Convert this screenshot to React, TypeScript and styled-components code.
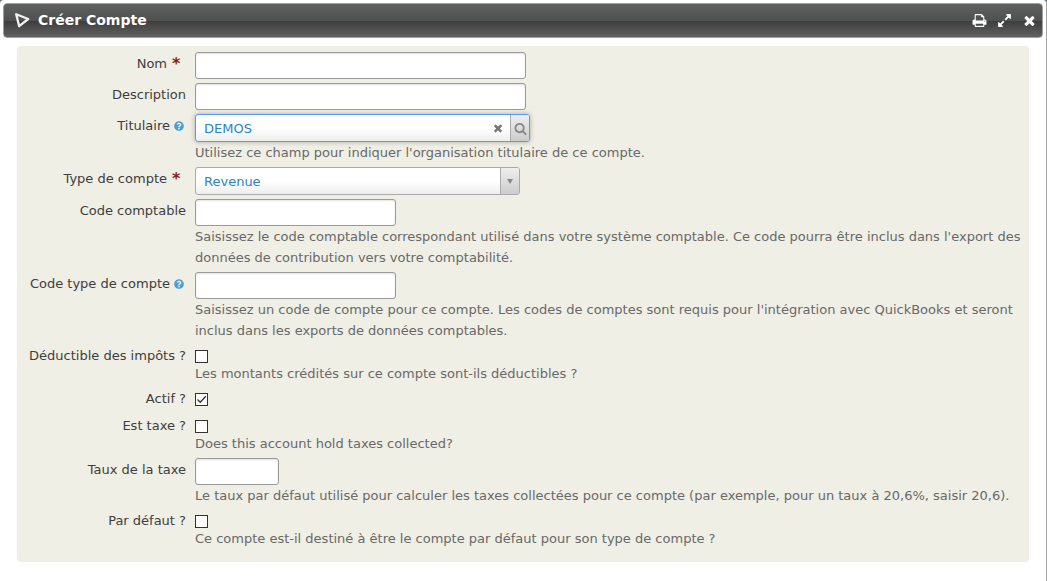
import React from 'react';
import styled, { createGlobalStyle, css } from 'styled-components';
import { FaQuestionCircle } from 'react-icons/fa';

const GlobalStyle = createGlobalStyle`
  *, *::before, *::after { box-sizing: border-box; }
  body {
    margin: 0;
    background: #6d7580;
    color: #3e3e3e;
    font: 13px/21px Verdana, "DejaVu Sans", sans-serif;
  }
`;

const Dialog = styled.main`
  min-height: 100vh;
  padding: 3px 3px 19px;
  background: #fff;
  border-right: 1px solid #a3a3a3;
  border-radius: 4px 4px 0 0;
`;

const TitleBar = styled.header`
  display: flex;
  align-items: center;
  height: 35px;
  padding: 0 5px 0 10px;
  border: 1px solid #a0a0a0;
  border-radius: 4px;
  background: linear-gradient(#5f6160 0%, #4f5050 50%, #3d3d3d 51%, #616161 100%);
  color: #fff;
`;

const Title = styled.h1`
  flex: 1;
  margin: 0 0 0 7px;
  font-size: 14px;
  line-height: 21px;
  font-weight: bold;
`;

const Actions = styled.div`
  display: flex;
  gap: 9px;
`;

const IconButton = styled.button`
  display: flex;
  align-items: center;
  justify-content: center;
  width: 16px;
  height: 16px;
  padding: 0;
  border: 0;
  background: none;
  color: inherit;
  cursor: pointer;
`;

const Panel = styled.form`
  margin: 8px 14px 0;
  padding: 4px 4px 11px 10px;
  border-radius: 4px;
  background: #efefe5;
`;

const Row = styled.div`
  display: grid;
  grid-template-columns: 159px minmax(0, 1fr);
  column-gap: 9px;
  padding: 2px 0;
`;

const LabelCell = styled.div<{ $raised?: boolean }>`
  display: flex;
  align-items: flex-start;
  justify-content: flex-end;
  padding-top: ${p => (p.$raised ? 0 : 1)}px;
  white-space: nowrap;
`;

const Required = styled.span`
  width: 14px;
  margin-left: 5px;
  color: #8a1f11;
  font-size: 16px;
  font-weight: bold;
`;

const HelpLink = styled.a`
  display: flex;
  align-items: center;
  width: 10px;
  height: 22px;
  margin: 0 2px 0 4px;
  color: #4d9fcf;
`;

const Help = styled.p`
  margin: 0;
  color: #696969;
`;

const fieldFrame = css`
  border: 1px solid #999;
  border-radius: 3px;
`;

const TextInput = styled.input<{ $width: number }>`
  ${fieldFrame}
  display: block;
  width: ${p => p.$width}px;
  max-width: 100%;
  height: 27px;
  padding: 0 8px;
  background: #fff;
  box-shadow: inset 0 1px 2px rgba(0, 0, 0, 0.12);
  font: inherit;
`;

const Combo = styled.div<{ $width: number; $active?: boolean }>`
  ${fieldFrame}
  display: flex;
  width: ${p => p.$width}px;
  max-width: 100%;
  height: 28px;
  overflow: hidden;
  background: linear-gradient(#fff 50%, #eee 100%);
  border-color: ${p => (p.$active ? '#5897fb' : '#aaa')};
  box-shadow: ${p => (p.$active ? '0 0 5px rgba(0, 0, 0, 0.3)' : 'none')};
`;

const comboText = css`
  flex: 1;
  min-width: 0;
  padding: 0 8px;
  border: 0;
  outline: 0;
  appearance: none;
  background: transparent;
  color: #2786c2;
  font: inherit;
`;

const ComboInput = styled.input`${comboText}`;
const ComboSelect = styled.select`${comboText}`;

const ClearButton = styled(IconButton)`
  height: 26px;
  margin-right: 4px;
  color: #777;
`;

const ComboEnd = styled.button`
  display: flex;
  align-items: center;
  justify-content: center;
  width: 19px;
  padding: 0;
  border: 0;
  border-left: 1px solid #aaa;
  background: linear-gradient(#eee 0%, #ccc 100%);
  color: #888;
`;

const SelectEnd = styled(ComboEnd).attrs({ as: 'span' })`
  pointer-events: none;
`;

const Checkbox = styled.input.attrs({ type: 'checkbox' })`
  display: block;
  appearance: none;
  width: 13px;
  height: 13px;
  margin: 5px 0 0;
  border: 1px solid #333;
  background: #fff;
  &:checked {
    background: #fff url("data:image/svg+xml,%3Csvg xmlns='http://www.w3.org/2000/svg' viewBox='0 0 11 11'%3E%3Cpath d='M1.5 5.5l2.7 2.7 5.6-6' fill='none' stroke='%23333' stroke-width='1.3'/%3E%3C/svg%3E");
  }
`;

const CheckOnly = styled.div`
  display: flow-root;
  height: 23px;
`;

const glyphs = {
  print:
    'M448 1536h896v-256h-896v256zm0-640h896v-384h-160q-40 0-68-28t-28-68v-160h-640v640zm1152 64q0-26-19-45t-45-19-45 19-19 45 19 45 45 19 45-19 19-45zm128 0v416q0 13-9.5 22.5t-22.5 9.5h-224v160q0 40-28 68t-68 28h-960q-40 0-68-28t-28-68v-160h-224q-13 0-22.5-9.5t-9.5-22.5v-416q0-79 56.5-135.5t135.5-56.5h64v-544q0-40 28-68t68-28h672q40 0 88 20t76 48l152 152q28 28 48 76t20 88v256h64q79 0 135.5 56.5t56.5 135.5z',
  expand:
    'M883 1056q0 13-10 23l-332 332 144 144q19 19 19 45t-19 45-45 19h-448q-26 0-45-19t-19-45v-448q0-26 19-45t45-19 45 19l144 144 332-332q10-10 23-10t23 10l114 114q10 10 10 23zm781-864v448q0 26-19 45t-45 19-45-19l-144-144-332 332q-10 10-23 10t-23-10l-114-114q-10-10-10-23t10-23l332-332-144-144q-19-19-19-45t19-45 45-19h448q26 0 45 19t19 45z',
  close:
    'M1490 1322q0 40-28 68l-136 136q-28 28-68 28t-68-28l-294-294-294 294q-28 28-68 28t-68-28l-136-136q-28-28-28-68t28-68l294-294-294-294q-28-28-28-68t28-68l136-136q28-28 68-28t68 28l294 294 294-294q28-28 68-28t68 28l136 136q28 28 28 68t-28 68l-294 294 294 294q28 28 28 68z',
  search:
    'M1216 832q0-185-131.5-316.5t-316.5-131.5-316.5 131.5-131.5 316.5 131.5 316.5 316.5 131.5 316.5-131.5 131.5-316.5zm512 832q0 52-38 90t-90 38q-54 0-90-38l-343-342q-179 124-399 124-143 0-273.5-55.5t-225-150-150-225-55.5-273.5 55.5-273.5 150-225 225-150 273.5-55.5 273.5 55.5 225 150 150 225 55.5 273.5q0 220-124 399l343 343q37 37 37 90z',
};

const Glyph = ({ name, size }: { name: keyof typeof glyphs; size: number }) => (
  <svg width={size} height={size} viewBox="0 0 1792 1792" fill="currentColor" aria-hidden="true">
    <path d={glyphs[name]} />
  </svg>
);

type FieldProps = {
  id: string;
  label: string;
  required?: boolean;
  info?: boolean;
  checkbox?: boolean;
  help?: string;
  children: React.ReactNode;
};

const Field = ({ id, label, required, info, checkbox, help, children }: FieldProps) => (
  <Row>
    <LabelCell $raised={checkbox}>
      <label htmlFor={id}>{label}</label>
      {required && <Required>*</Required>}
      {info && (
        <HelpLink href="#" aria-label={`Aide : ${label}`}>
          <FaQuestionCircle size={10} />
        </HelpLink>
      )}
    </LabelCell>
    <div>
      {children}
      {help && <Help>{help}</Help>}
    </div>
  </Row>
);

export default function App() {
  return (
    <>
      <GlobalStyle />
      <Dialog>
        <TitleBar>
          <svg width="17" height="17" viewBox="0 0 17 17" fill="none" stroke="#f2f2f2" strokeWidth="2.3" strokeLinejoin="round" aria-hidden="true">
            <path d="M2.2 2.2L14.2 7L5.2 14.2Z" />
          </svg>
          <Title>Créer Compte</Title>
          <Actions>
            <IconButton aria-label="Imprimer"><Glyph name="print" size={15} /></IconButton>
            <IconButton aria-label="Agrandir"><Glyph name="expand" size={15} /></IconButton>
            <IconButton aria-label="Fermer"><Glyph name="close" size={15} /></IconButton>
          </Actions>
        </TitleBar>
        <Panel onSubmit={e => e.preventDefault()}>
          <Field id="name" label="Nom" required>
            <TextInput id="name" $width={331} />
          </Field>
          <Field id="description" label="Description">
            <TextInput id="description" $width={331} />
          </Field>
          <Field id="owner" label="Titulaire" info help="Utilisez ce champ pour indiquer l'organisation titulaire de ce compte.">
            <Combo $width={335} $active>
              <ComboInput id="owner" defaultValue="DEMOS" />
              <ClearButton type="button" aria-label="Effacer"><Glyph name="close" size={12} /></ClearButton>
              <ComboEnd type="button" aria-label="Rechercher"><Glyph name="search" size={13} /></ComboEnd>
            </Combo>
          </Field>
          <Field id="type" label="Type de compte" required>
            <Combo $width={325}>
              <ComboSelect id="type" defaultValue="Revenue">
                <option>Revenue</option>
              </ComboSelect>
              <SelectEnd>
                <svg width="6" height="6" viewBox="0 0 6 6" fill="currentColor" aria-hidden="true">
                  <path d="M0 1H6L3 6Z" />
                </svg>
              </SelectEnd>
            </Combo>
          </Field>
          <Field id="code" label="Code comptable" help="Saisissez le code comptable correspondant utilisé dans votre système comptable. Ce code pourra être inclus dans l'export des données de contribution vers votre comptabilité.">
            <TextInput id="code" $width={201} />
          </Field>
          <Field id="type-code" label="Code type de compte" info help="Saisissez un code de compte pour ce compte. Les codes de comptes sont requis pour l'intégration avec QuickBooks et seront inclus dans les exports de données comptables.">
            <TextInput id="type-code" $width={201} />
          </Field>
          <Field id="deductible" label="Déductible des impôts ?" checkbox help="Les montants crédités sur ce compte sont-ils déductibles ?">
            <Checkbox id="deductible" />
          </Field>
          <Field id="active" label="Actif ?" checkbox>
            <CheckOnly><Checkbox id="active" defaultChecked /></CheckOnly>
          </Field>
          <Field id="is-tax" label="Est taxe ?" checkbox help="Does this account hold taxes collected?">
            <Checkbox id="is-tax" />
          </Field>
          <Field id="tax-rate" label="Taux de la taxe" help="Le taux par défaut utilisé pour calculer les taxes collectées pour ce compte (par exemple, pour un taux à 20,6%, saisir 20,6).">
            <TextInput id="tax-rate" $width={84} />
          </Field>
          <Field id="default" label="Par défaut ?" checkbox help="Ce compte est-il destiné à être le compte par défaut pour son type de compte ?">
            <Checkbox id="default" />
          </Field>
        </Panel>
      </Dialog>
    </>
  );
}
